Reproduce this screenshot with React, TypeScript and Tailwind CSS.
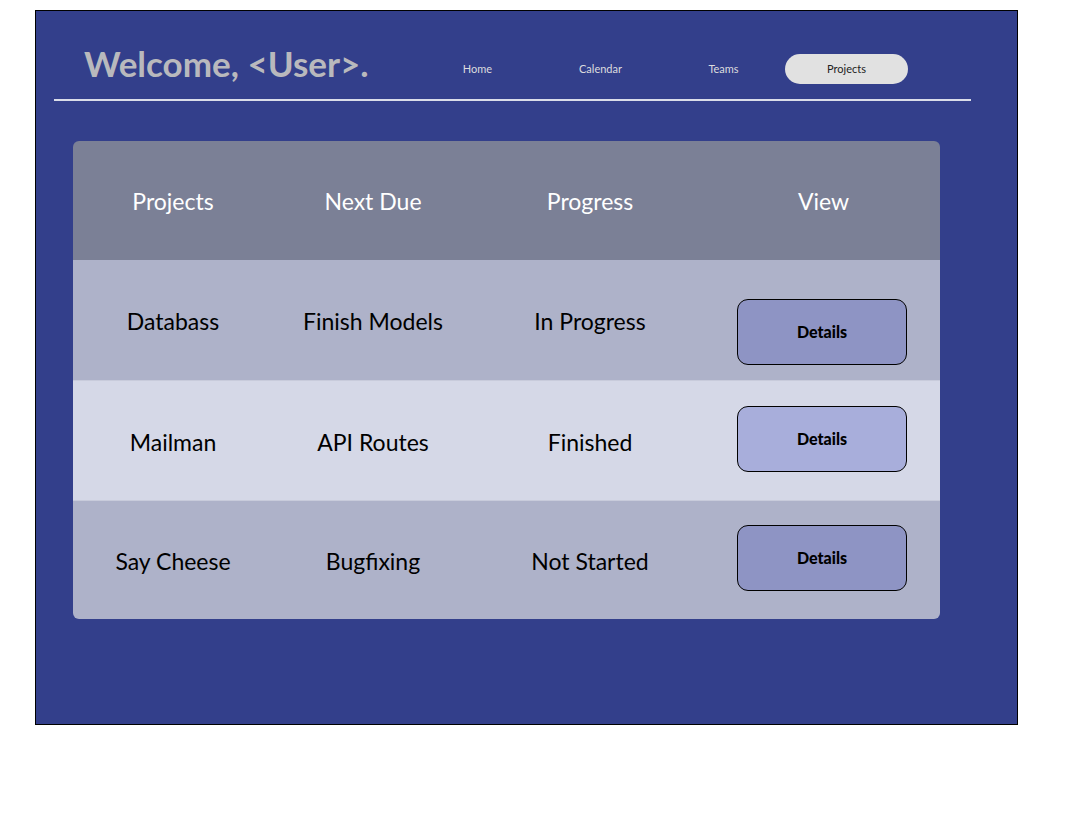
import React from "react";

const rows = [
  { name: "Databass", due: "Finish Models", progress: "In Progress", bg: "bg-[#aeb2c9]", btn: "bg-[#8e94c4]", first: true, h: "h-[120px]" },
  { name: "Mailman", due: "API Routes", progress: "Finished", bg: "bg-[#d5d8e7]", btn: "bg-[#a8aedb]", first: false, h: "h-[120px]" },
  { name: "Say Cheese", due: "Bugfixing", progress: "Not Started", bg: "bg-[#aeb2c9]", btn: "bg-[#8e94c4]", first: false, h: "h-[119px]" },
];

export default function App() {
  return (
    <div className="min-h-screen bg-white pt-[10px] pl-[35px]" style={{ fontFamily: "Lato, 'Noto Sans', sans-serif" }}>
      <div className="w-[983px] h-[715px] border border-black bg-[#333f8b]">
        <div className="ml-[18px] w-[917px] pt-[37px]">
          <div className="flex items-start h-[36px]">
            <h1 className="w-[362px] pl-[30px] -mt-[2px] text-[35px] font-bold text-[#b9b9bd] leading-none whitespace-nowrap">
              Welcome, &lt;User&gt;.
            </h1>
            <nav className="flex mt-[6px]">
              {["Home", "Calendar", "Teams"].map((t) => (
                <div key={t} className="w-[123px] h-[30px] flex items-center justify-center text-[11px] text-[#dcdcde]">
                  {t}
                </div>
              ))}
              <div className="w-[123px] h-[30px] flex items-center justify-center text-[11px] text-[#222] bg-[#e1e1e1] rounded-full">
                Projects
              </div>
            </nav>
          </div>
          <div className="mt-[15px] h-[2px] bg-[#dadde9]" />
        </div>
        <div className="ml-[37px] mt-[40px] w-[867px] rounded-[6px] overflow-hidden">
          <div className="grid grid-cols-[200px_200px_234px_1fr] h-[119px] items-center bg-[#7b8096] text-white text-[23px] pt-[2px]">
            <div className="text-center">Projects</div>
            <div className="text-center">Next Due</div>
            <div className="text-center">Progress</div>
            <div className="text-center">View</div>
          </div>
          {rows.map((r, i) => (
            <div
              key={r.name}
              className={`grid grid-cols-[200px_200px_234px_1fr] ${r.h} items-center text-black text-[23px] ${r.bg} ${i > 0 ? "border-t border-[#c8cbdb]" : ""}`}
            >
              <div className="text-center pt-[3px]">{r.name}</div>
              <div className="text-center pt-[3px]">{r.due}</div>
              <div className="text-center pt-[3px]">{r.progress}</div>
              <div className="flex justify-center pr-[3px]">
                <button
                  className={`w-[170px] h-[66px] rounded-[11px] border border-black ${r.btn} text-[16px] font-black text-black ${r.first ? "mt-[24px]" : "mb-[4px]"}`}
                >
                  Details
                </button>
              </div>
            </div>
          ))}
        </div>
      </div>
    </div>
  );
}
